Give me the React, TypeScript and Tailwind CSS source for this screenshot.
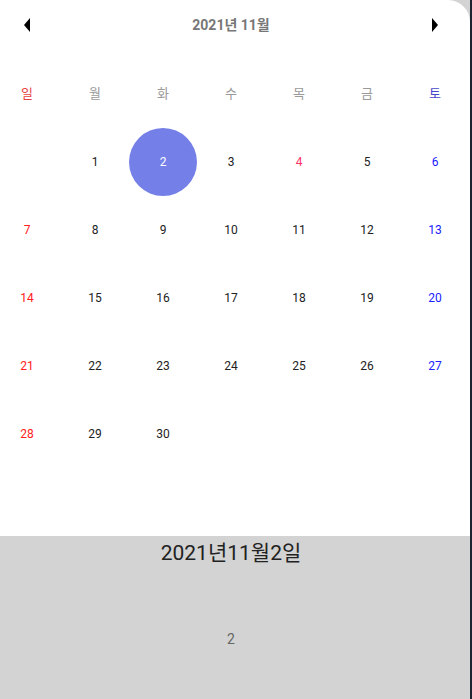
import React from "react"

const weekdays = [
  { label: "일", cls: "text-[#e8433f]" },
  { label: "월", cls: "text-[#9a9a9a]" },
  { label: "화", cls: "text-[#9a9a9a]" },
  { label: "수", cls: "text-[#9a9a9a]" },
  { label: "목", cls: "text-[#9a9a9a]" },
  { label: "금", cls: "text-[#9a9a9a]" },
  { label: "토", cls: "text-[#4a48c8]" },
]

// November 2021 starts on Monday
const cells: (number | null)[] = [null, ...Array.from({ length: 30 }, (_, i) => i + 1)]
while (cells.length < 35) cells.push(null)

function dayColor(day: number, col: number) {
  if (day === 2) return "text-white"
  if (day === 4) return "text-[#ff3366]"
  if (col === 0) return "text-[#ff2020]"
  if (col === 6) return "text-[#2020ff]"
  return "text-[#222]"
}

export default function App() {
  return (
    <div className="flex h-[699px] w-[472px] overflow-hidden bg-[#d3d3d3] font-['Roboto','Noto_Sans_CJK_KR',sans-serif]">
      <div className="flex w-[470px] flex-col">
        <div className="h-[536px] w-[470px] rounded-tr-[22px] bg-white">
          <div className="w-[462px]">
            <div className="flex h-[50px] items-center justify-between px-[23px]">
              <svg width="8" height="16" viewBox="0 0 8 16">
                <path d="M7 1 L1 8 L7 15 Z" fill="#000" />
              </svg>
              <span className="text-[14px] font-bold text-[#777]">2021년 11월</span>
              <svg width="8" height="16" viewBox="0 0 8 16">
                <path d="M1 1 L7 8 L1 15 Z" fill="#000" />
              </svg>
            </div>

            <div className="-mx-[7px] grid grid-cols-[repeat(7,68px)] pt-[31px]">
              {weekdays.map((w) => (
                <div key={w.label} className={`flex h-[26px] items-center justify-center text-[13px] ${w.cls}`}>
                  {w.label}
                </div>
              ))}
            </div>

            <div className="-mx-[7px] mt-[21px] grid grid-cols-[repeat(7,68px)]">
              {cells.map((d, i) => (
                <div key={i} className="flex h-[68px] items-center justify-center">
                  {d !== null && (
                    <div
                      className={`flex h-[68px] w-[68px] items-center justify-center rounded-full text-[12px] ${
                        d === 2 ? "bg-[#7480e7]" : ""
                      } ${dayColor(d, i % 7)}`}
                    >
                      {d}
                    </div>
                  )}
                </div>
              ))}
            </div>
          </div>
        </div>

        <div className="flex w-[462px] flex-col items-center">
          <div className="mt-[4px] text-[21px] leading-[26px] text-[#222]">2021년11월2일</div>
          <div className="mt-[63px] text-[14px] text-[#666]">2</div>
        </div>
      </div>
      <div className="h-full w-[2px] bg-[#1e2330]" />
    </div>
  )
}
